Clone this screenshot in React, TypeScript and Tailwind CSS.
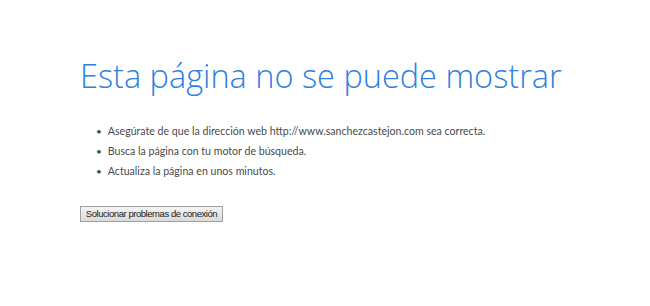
import React from 'react';

const items = [
  'Asegúrate de que la dirección web http://www.sanchezcastejon.com sea correcta.',
  'Busca la página con tu motor de búsqueda.',
  'Actualiza la página en unos minutos.',
];

export default function App() {
  return (
    <div className="w-[650px] h-[306px] bg-white pl-[80px] pt-[56px]">
      <h1 className="text-[32.5px] leading-[40px] font-light text-[#2f80e0] [font-family:'Open_Sans',sans-serif]">
        Esta página no se puede mostrar
      </h1>
      <ul className="mt-[28px] ml-[16px] flex flex-col gap-[6px] text-[10.6px] leading-[14px] text-[#4a4a4a] [font-family:'Lato',sans-serif]">
        {items.map((item) => (
          <li key={item} className="flex items-start gap-[6px]">
            <span className="text-[10px]">•</span>
            <span>{item}</span>
          </li>
        ))}
      </ul>
      <button className="mt-[28px] h-[16px] w-[143px] border border-[#a0a0a0] bg-gradient-to-b from-[#f4f4f4] to-[#dadada] whitespace-nowrap text-[9.5px] leading-[14px] tracking-[-0.45px] text-[#222] [font-family:'Liberation_Sans',sans-serif]">
        Solucionar problemas de conexión
      </button>
    </div>
  );
}
